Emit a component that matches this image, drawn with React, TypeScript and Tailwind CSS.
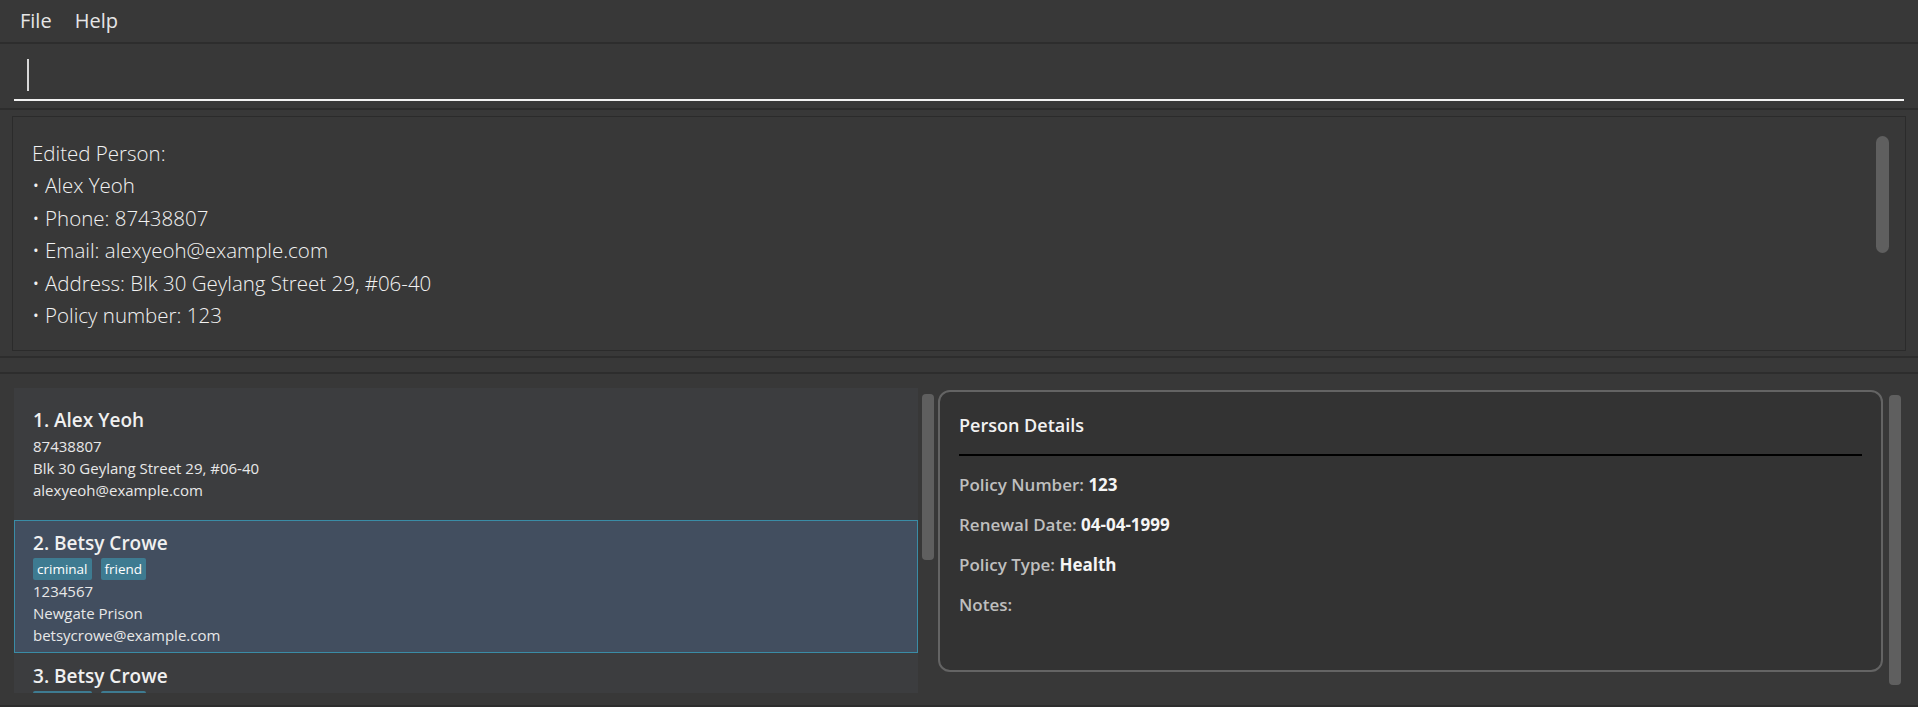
import { useState } from "react";

type Person = {
  name: string;
  phone: string;
  address: string;
  email: string;
  tags: string[];
};

const PEOPLE: Person[] = [
  { name: "Alex Yeoh", phone: "87438807", address: "Blk 30 Geylang Street 29, #06-40", email: "alexyeoh@example.com", tags: [] },
  { name: "Betsy Crowe", phone: "1234567", address: "Newgate Prison", email: "betsycrowe@example.com", tags: ["criminal", "friend"] },
  { name: "Betsy Crowe", phone: "1234567", address: "Newgate Prison", email: "betsycrowe@example.com", tags: ["criminal", "friend"] },
];

const RESULT = [
  "Edited Person:",
  "• Alex Yeoh",
  "• Phone: 87438807",
  "• Email: alexyeoh@example.com",
  "• Address: Blk 30 Geylang Street 29, #06-40",
  "• Policy number: 123",
];

const DETAILS = [
  { label: "Policy Number:", value: "123" },
  { label: "Renewal Date:", value: "04-04-1999" },
  { label: "Policy Type:", value: "Health" },
  { label: "Notes:", value: "" },
];

const PersonCard = ({ p, index, selected }: { p: Person; index: number; selected: boolean }) => (
  <div
    className={`px-[18px] pt-[7px] border ${p.tags.length ? "pb-[6px]" : "pb-[18px]"} ${
      selected ? "bg-[#424e5f] border-[#3a8ca6]" : "border-transparent"
    }`}
  >
    <div className="text-[19px] font-semibold text-[#f0f0f0] leading-[30px]">
      {index}. {p.name}
    </div>
    {p.tags.length > 0 && (
      <div className="flex gap-[9px] h-[22px]">
        {p.tags.map((t) => (
          <span key={t} className="bg-[#3e7b91] text-white text-[13.5px] leading-[22px] px-[4px] rounded-[2px]">
            {t}
          </span>
        ))}
      </div>
    )}
    <div className="text-[15px] text-[#e8e8e8] leading-[22px]">{p.phone}</div>
    <div className="text-[15px] text-[#e8e8e8] leading-[22px]">{p.address}</div>
    <div className="text-[15px] text-[#e8e8e8] leading-[22px]">{p.email}</div>
  </div>
);

export default function App() {
  const [selected] = useState(1);

  return (
    <div
      className="w-full h-[707px] bg-[#383838] flex flex-col overflow-hidden text-white"
      style={{ fontFamily: "'Open Sans', 'Noto Sans', sans-serif" }}
    >
      {/* menu bar */}
      <div className="h-[44px] flex items-center gap-[23px] px-[20px] text-[20px] text-[#e6e6e6] border-b-2 border-[#2d2d2d] shrink-0">
        <span>File</span>
        <span>Help</span>
      </div>

      {/* command box */}
      <div className="h-[66px] px-[14px] pt-[15px] border-b-2 border-[#2d2d2d] shrink-0">
        <div className="h-[42px] border-b-2 border-[#f2f2f2] pl-[13px]">
          <div className="w-[2px] h-[32px] bg-[#d8d8d8]" />
        </div>
      </div>

      {/* result display */}
      <div className="h-[248px] px-[12px] pt-[6px] pb-[5px] border-b-2 border-[#2d2d2d] shrink-0">
        <div className="h-[235px] border border-[#2b2b2b] flex justify-between pl-[19px] pr-[16px] pt-[20px]">
          <div className="text-[20.5px] font-light text-[#f2f2f2] leading-[32.4px]">
            {RESULT.map((r) => (
              <div key={r}>{r}</div>
            ))}
          </div>
          <div className="w-[13px] h-[117px] -mt-[1px] rounded-full bg-[#5f5f5f]" />
        </div>
      </div>

      {/* splitter */}
      <div className="h-[16px] border-b-2 border-[#2d2d2d] shrink-0" />

      {/* bottom area */}
      <div className="flex-1 flex pt-[14px] pb-[12px] pl-[14px] pr-[17px] gap-[4px] border-b-2 border-[#2d2d2d] min-h-0">
        <div className="w-[904px] bg-[#3c3d3f] overflow-hidden flex flex-col pt-[9px] shrink-0">
          {PEOPLE.map((p, i) => (
            <PersonCard key={i} p={p} index={i + 1} selected={i === selected} />
          ))}
        </div>
        <div className="w-[12px] h-[166px] mt-[6px] rounded-[4px] bg-[#5f5f5f] shrink-0" />
        <div className="flex-1 flex gap-[6px]">
          <div className="flex-1 h-[282px] mt-[2px] rounded-[12px] border-2 border-[#646464] bg-[#333333] px-[19px] pt-[18px]">
            <div className="text-[18px] font-semibold text-[#f2f2f2] leading-[30px]">Person Details</div>
            <div className="h-[1.5px] bg-black mt-[14px]" />
            <div className="mt-[16px] flex flex-col gap-[14px]">
              {DETAILS.map((d) => (
                <div key={d.label} className="text-[17px] font-semibold leading-[26px]">
                  <span className="text-[#bfbfbf]">{d.label}</span>{" "}
                  <span className="text-[#f5f5f5] font-bold">{d.value}</span>
                </div>
              ))}
            </div>
          </div>
          <div className="w-[12px] h-[290px] mt-[7px] rounded-[4px] bg-[#5f5f5f] shrink-0" />
        </div>
      </div>
    </div>
  );
}
